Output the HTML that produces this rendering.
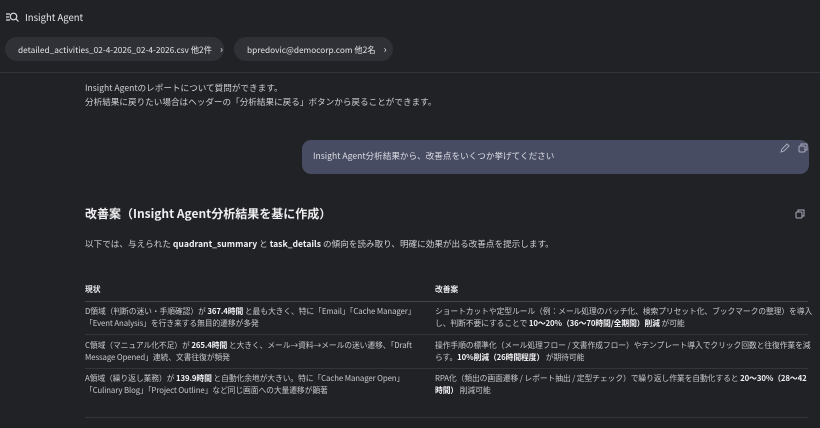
<!DOCTYPE html>
<html><head><meta charset="utf-8"><style>
*{margin:0;padding:0;box-sizing:border-box}
body{width:820px;height:428px;overflow:hidden;background:#212226;color:#d4d5d9;font-family:"Noto Sans CJK JP","Liberation Sans",sans-serif;position:relative}
.abs{position:absolute;white-space:nowrap}
.chip{position:absolute;top:37px;height:24px;background:#303136;border-radius:12px;font-size:8.3px;color:#e6e6e8;line-height:24px;padding-left:13px;white-space:nowrap}
.chip span{margin-left:8px;font-size:10px}
b{color:#f2f2f4;font-weight:bold}
.t{font-size:7.8px;line-height:12px;color:#c8c9cd;position:absolute;white-space:nowrap;letter-spacing:-0.1px}
.hr{position:absolute;left:85px;width:723px;height:1px;background:#34353b}
</style></head><body>
<svg class="abs" style="left:5px;top:11px" width="14" height="12" viewBox="0 0 14 12" fill="none" stroke="#ddd" stroke-width="1.2"><path d="M1 3h4M1 6h3M1 9h4"/><circle cx="8.5" cy="5.5" r="3.3"/><path d="M11 8l2.5 2.5"/></svg>
<div class="abs" style="left:25px;top:10px;font-size:9.5px;color:#e8e8ea">Insight Agent</div>
<div class="chip" style="left:5px;width:219px">detailed_activities_02-4-2026_02-4-2026.csv 他2件<span>›</span></div>
<div class="chip" style="left:234px;width:159px">bpredovic@democorp.com 他2名<span>›</span></div>
<div style="position:absolute;left:0;top:72px;width:820px;height:1px;background:#34353a"></div>
<div class="abs" style="left:85px;top:81px;font-size:8.6px;line-height:14px;color:#cfd0d4">Insight Agentのレポートについて質問ができます。<br>分析結果に戻りたい場合はヘッダーの「分析結果に戻る」ボタンから戻ることができます。</div>
<div style="position:absolute;left:302px;top:140px;width:507px;height:34px;background:#474c63;border-radius:9px"></div>
<div class="abs" style="left:313px;top:150px;font-size:8.6px;color:#dcdde3">Insight Agent分析結果から、改善点をいくつか挙げてください</div>
<svg class="abs" style="left:780px;top:143px" width="28" height="10" viewBox="0 0 28 10" fill="none" stroke="#aab" stroke-width="1"><path d="M1 9l1-3 5-5 2 2-5 5z"/><rect x="19" y="3" width="6" height="6" rx="1"/><path d="M21 3V1h6v6h-2"/></svg>
<div class="abs" style="left:85px;top:205px;font-size:12px;font-weight:bold;color:#eeeef0">改善案（Insight Agent分析結果を基に作成）</div>
<svg class="abs" style="left:795px;top:209px" width="10" height="10" viewBox="0 0 10 10" fill="none" stroke="#aab" stroke-width="1"><rect x="1" y="3" width="6" height="6" rx="1"/><path d="M3 3V1h6v6H7"/></svg>
<div class="abs" style="left:85px;top:238px;font-size:8.6px;color:#cfd0d4">以下では、与えられた <b>quadrant_summary</b> と <b>task_details</b> の傾向を読み取り、明確に効果が出る改善点を提示します。</div>
<div class="t" style="left:85px;top:284px;font-weight:bold;color:#e8e8ea">現状</div>
<div class="t" style="left:435px;top:284px;font-weight:bold;color:#e8e8ea">改善案</div>
<div class="hr" style="top:301px;background:#44454c"></div>
<div class="t" style="left:85px;top:306px">D領域（判断の迷い・手順確認）が <b>367.4時間</b> と最も大きく、特に「Email」「Cache Manager」<br>「Event Analysis」を行き来する無目的遷移が多発</div>
<div class="t" style="left:435px;top:306px">ショートカットや定型ルール（例：メール処理のバッチ化、検索プリセット化、ブックマークの整理）を導入<br>し、判断不要にすることで <b>10〜20%（36〜70時間/全期間）削減</b> が可能</div>
<div class="hr" style="top:334px"></div>
<div class="t" style="left:85px;top:340px">C領域（マニュアル化不足）が <b>265.4時間</b> と大きく、メール→資料→メールの迷い遷移、「Draft<br>Message Opened」連続、文書往復が頻発</div>
<div class="t" style="left:435px;top:340px">操作手順の標準化（メール処理フロー / 文書作成フロー）やテンプレート導入でクリック回数と往復作業を減<br>らす。<b>10%削減（26時間程度）</b> が期待可能</div>
<div class="hr" style="top:368px"></div>
<div class="t" style="left:85px;top:373px">A領域（繰り返し業務）が <b>139.9時間</b> と自動化余地が大きい。特に「Cache Manager Open」<br>「Culinary Blog」「Project Outline」など同じ画面への大量遷移が顕著</div>
<div class="t" style="left:435px;top:373px">RPA化（頻出の画面遷移 / レポート抽出 / 定型チェック）で繰り返し作業を自動化すると <b>20〜30%（28〜42<br>時間）</b> 削減可能</div>
<div class="hr" style="top:417px"></div>
</body></html>
